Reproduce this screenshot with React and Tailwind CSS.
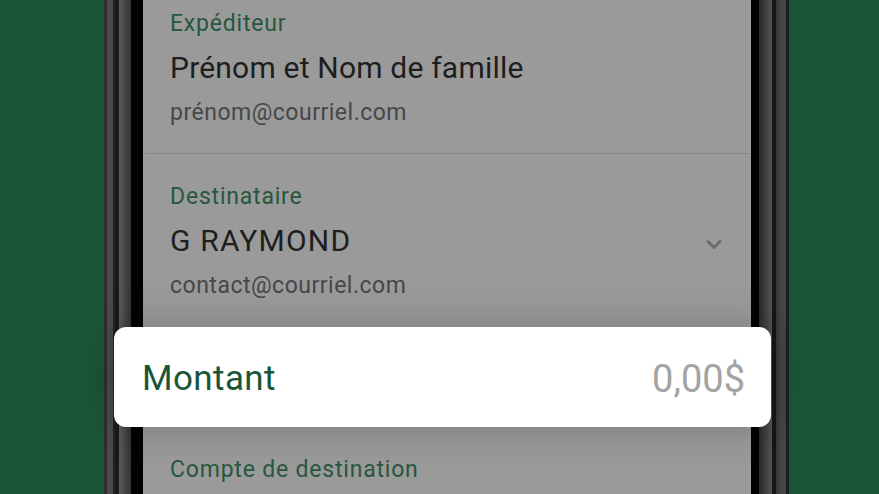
const font = { fontFamily: "Roboto, 'Noto Sans', sans-serif" };

function Field({ label, name, email, chevron, nameTracking = "tracking-[0.2px]" }) {
  return (
    <div className="px-[27px]">
      <div className="text-[23px] leading-[28px] tracking-[0.8px] text-[#27573d]">{label}</div>
      <div className="mt-[8px] flex items-center justify-between">
        <span className={`text-[30px] leading-[44px] text-[#1e1e1e] ${nameTracking}`}>{name}</span>
        {chevron && (
          <svg className="mr-[2px] mt-[6px]" width="16" height="11" viewBox="0 0 16 11" fill="none">
            <polyline
              points="2,2.5 8,8.5 14,2.5"
              stroke="#6c6c6c"
              strokeWidth="3"
              strokeLinecap="round"
              strokeLinejoin="round"
            />
          </svg>
        )}
      </div>
      <div className="mt-[8px] text-[23px] leading-[30px] tracking-[0.5px] text-[#474747]">{email}</div>
    </div>
  );
}

export default function App() {
  return (
    <div className="flex h-[494px] w-[879px] overflow-hidden bg-[#1b5538]" style={font}>
      <div className="w-[104px] shrink-0" />

      {/* left bezel */}
      <div className="flex shrink-0">
        <div className="w-[3px] bg-[#2f2f2f]" />
        <div className="w-[6px] bg-[#4a4a4a]" />
        <div className="w-[2px] bg-[#222]" />
        <div className="w-[4px] bg-[#1a1a1a]" />
        <div className="w-[12px] bg-gradient-to-r from-[#5c5c5c] to-[#333]" />
        <div className="w-[12px] bg-black" />
      </div>

      {/* screen */}
      <div className="relative z-10 flex w-[608px] shrink-0 flex-col bg-[#9a9a9a]">
        <div className="pt-[10px]">
          <Field label="Expéditeur" name="Prénom et Nom de famille" email="prénom@courriel.com" />
        </div>
        <div className="mx-[2px] mt-[25px] h-px bg-[#888]" />
        <div className="mt-[29px]">
          <Field
            label="Destinataire"
            name="G RAYMOND"
            email="contact@courriel.com"
            nameTracking="tracking-[1.2px]"
            chevron
          />
        </div>

        <div className="-ml-[29px] -mr-[20px] mt-[26px] flex h-[100px] items-center justify-between rounded-[12px] bg-white pl-[28px] pr-[26px] pt-[4px] shadow-[0_0_40px_rgba(0,0,0,0.22)]">
          <span className="text-[35px] leading-[44px] tracking-[0.4px] text-[#1b5538]">Montant</span>
          <span className="text-[38px] leading-[44px] text-[#a3a3a3]">0,00$</span>
        </div>

        <div className="mt-[29px] px-[27px] text-[23px] leading-[28px] tracking-[0.8px] text-[#27573d]">
          Compte de destination
        </div>
      </div>

      {/* right bezel */}
      <div className="flex shrink-0">
        <div className="w-[8px] bg-black" />
        <div className="w-[13px] bg-gradient-to-r from-[#2a2a2a] to-[#555]" />
        <div className="w-[4px] bg-[#161616]" />
        <div className="w-[3px] bg-[#3a3a3a]" />
        <div className="w-[7px] bg-[#444]" />
        <div className="w-[3px] bg-[#1e1e1e]" />
      </div>

      <div className="flex-1" />
    </div>
  );
}
